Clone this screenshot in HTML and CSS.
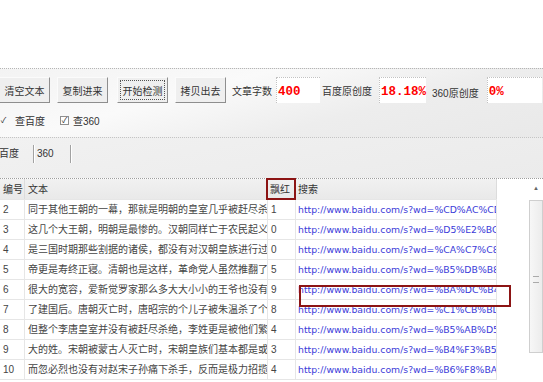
FILE: index.html
```html
<!DOCTYPE html>
<html lang="zh-CN">
<head>
<meta charset="UTF-8" />
<title>原创度检测</title>
<link rel="stylesheet" href="styles.css">
</head>
<body>
<div class="blank"></div>

<!-- Панель кнопок -->
<div class="toolbar">
    <div class="btn-row">
        <button class="btn first">清空文本</button>
        <button class="btn">复制进来</button>
        <button class="btn focus">开始检测</button>
        <button class="btn">拷贝出去</button>
        <span class="label">文章字数</span>
        <span class="result r1">400</span>
        <span class="label">百度原创度</span>
        <span class="result r2">18.18%</span>
        <span class="label low">360原创度</span>
        <span class="result r3">0%</span>
    </div>
    <div class="check-row">
        <label class="check first"><span class="box">&#10003;</span>查百度</label>
        <label class="check"><span class="box">&#10003;</span>查360</label>
    </div>
</div>

<div class="tabs">
    <span class="tab t1">百度</span>
    <span class="tab t2">360</span>
</div>

<!-- Таблица результатов -->
<div class="grid-wrap">
    <div class="table">
        <div class="row head">
            <span>编号</span><span>文本</span><span>飘红</span><span>搜索</span>
        </div>
        <div class="row"><span>2</span><span>同于其他王朝的一幕，那就是明朝的皇室几乎被赶尽杀绝</span><span>1</span><span class="link">http://www.baidu.com/s?wd=%CD%AC%CD%CD</span></div>
        <div class="row"><span>3</span><span>这几个大王朝，明朝是最惨的。汉朝同样亡于农民起义</span><span>0</span><span class="link">http://www.baidu.com/s?wd=%D5%E2%BC%B8</span></div>
        <div class="row"><span>4</span><span>是三国时期那些割据的诸侯，都没有对汉朝皇族进行过大</span><span>0</span><span class="link">http://www.baidu.com/s?wd=%CA%C7%C8%FD</span></div>
        <div class="row"><span>5</span><span>帝更是寿终正寝。清朝也是这样，革命党人虽然推翻了清</span><span>5</span><span class="link">http://www.baidu.com/s?wd=%B5%DB%B8%FC</span></div>
        <div class="row"><span>6</span><span>很大的宽容，爱新觉罗家那么多大大小小的王爷也没有被</span><span>9</span><span class="link">http://www.baidu.com/s?wd=%BA%DC%B4%F3</span></div>
        <div class="row"><span>7</span><span>了建国后。唐朝灭亡时，唐昭宗的个儿子被朱温杀了个</span><span>8</span><span class="link">http://www.baidu.com/s?wd=%C1%CB%BD%A8</span></div>
        <div class="row"><span>8</span><span>但整个李唐皇室并没有被赶尽杀绝，李姓更是被他们繁衍</span><span>4</span><span class="link">http://www.baidu.com/s?wd=%B5%AB%D5%FB</span></div>
        <div class="row"><span>9</span><span>大的姓。宋朝被蒙古人灭亡时，宋朝皇族们基本都是或被</span><span>3</span><span class="link">http://www.baidu.com/s?wd=%B4%F3%B5%C4</span></div>
        <div class="row"><span>10</span><span>而忽必烈也没有对赵宋子孙痛下杀手，反而是极力招揽</span><span>4</span><span class="link">http://www.baidu.com/s?wd=%B6%F8%BA%F6</span></div>
    </div>
    <div class="scroll">
        <div class="arrow">&#9650;</div>
        <div class="track"><span class="grip"></span></div>
    </div>

    <div class="mark mark-head"></div>
    <div class="mark mark-row"></div>
</div>
</body>
</html>
```

FILE: styles.css
```css
body {
    margin: 0;
    width: 543px;
    height: 382px;
    overflow: hidden;
    background: #fff;
    font-family: "Liberation Sans", "Noto Sans CJK SC", sans-serif;
    font-size: 10px;
    color: #333;
}
.blank {
    height: 68px;
}
/* Панель */
.toolbar {
    height: 68px;
    border-top: 1px dotted #b5b5b5;
    background: linear-gradient(165deg, #f3f3f3 0%, #fafafa 35%, #ededed 65%, #e9e9e9 100%);
}
.btn-row {
    display: flex;
    align-items: center;
    height: 26px;
    padding-top: 8px;
}
.btn {
    width: 51px;
    height: 26px;
    padding: 0;
    margin-right: 7px;
    font: inherit;
    color: #333;
    background: #efefef;
    border: 1px solid;
    border-color: #fbfbfb #8e8e8e #8e8e8e #fbfbfb;
}
.btn.first {
    margin-left: -1px;
}
.btn:nth-child(2) {
    margin-right: 9px;
}
.btn.focus {
    outline: 1px dotted #555;
    outline-offset: -4px;
}
.label {
    margin-left: -1px;
    margin-right: 4px;
    white-space: nowrap;
}
.label.low {
    padding-top: 4px;
}
.result {
    box-sizing: border-box;
    height: 26px;
    line-height: 28px;
    padding-left: 1px;
    background: #fff;
    border-top: 1px dotted #c2c2c2;
    border-left: 1px dotted #c2c2c2;
    color: #f00;
    font-family: "Liberation Mono", monospace;
    font-weight: bold;
    font-size: 12.5px;
}
.r1 { width: 44px; margin-right: 3px; }
.r2 { width: 47px; margin-right: 7px; margin-left: 3px; }
.r3 { width: 55px; margin-left: 4px; }

.check-row {
    display: flex;
    align-items: center;
    height: 16px;
    margin-top: 9px;
}
.check {
    display: flex;
    align-items: center;
    gap: 4px;
    margin-right: 15px;
}
.check.first {
    gap: 7px;
    margin-left: -1px;
}
.box {
    box-sizing: border-box;
    width: 9px;
    height: 9px;
    border: 1px solid #8f8f8f;
    background: #fff;
    font-size: 8px;
    line-height: 7px;
    text-align: center;
    color: #222;
}
.check.first .box {
    border-color: transparent;
    background: none;
}

/* Вкладки */
.tabs {
    display: flex;
    height: 33px;
    padding-top: 7px;
    border-top: 1px dotted #c4c4c4;
    background: linear-gradient(170deg, #f1f1f1, #ebebeb);
}
.tab {
    height: 18px;
    line-height: 18px;
    border-right: 1px solid #a2a2a2;
    box-shadow: 1px 0 0 #fff;
}
.t1 {
    width: 34px;
    margin-left: -1px;
}
.t2 {
    padding-left: 3px;
    width: 33px;
}

/* Таблица */
.grid-wrap {
    position: relative;
    display: flex;
    border-top: 1px dotted #9d9d9d;
}
.table {
    width: 497px;
}
.row {
    display: grid;
    grid-template-columns: 25px 243px 28px 201px;
    height: 20px;
    line-height: 20px;
    border-bottom: 1px solid #e6e6e6;
    box-sizing: border-box;
    color: #444;
}
.row span {
    overflow: hidden;
    white-space: nowrap;
    padding-left: 3px;
    border-right: 1px solid #e6e6e6;
}
.row span:nth-child(4) {
    padding-left: 2px;
}
.row.head {
    height: 21px;
    line-height: 21px;
    background: linear-gradient(#f1f1f1, #e9e9e9);
    color: #333;
}
.row.head span {
    border-right-color: #dcdcdc;
}
.row.head span:nth-child(3) {
    padding-left: 2px;
}
.link {
    font-family: "DejaVu Sans", sans-serif;
    font-size: 9.3px;
    color: #3b3bd9;
}
.scroll {
    display: flex;
    flex-direction: column;
    width: 14px;
    margin-left: auto;
}
.arrow {
    height: 21px;
    font-size: 6px;
    line-height: 18px;
    text-align: center;
    color: #666;
}
.track {
    position: relative;
    height: 153px;
    box-sizing: border-box;
    border: 1px solid #cfcfcf;
    background: linear-gradient(90deg, #f7f7f7, #ececec);
}
.grip {
    position: absolute;
    left: 3px;
    top: 75px;
    width: 6px;
    height: 5px;
    border-top: 1px solid #aaa;
    border-bottom: 1px solid #aaa;
}

/* Красные пометки */
.mark {
    position: absolute;
    border: 2px solid #8c1414;
    box-sizing: border-box;
}
.mark-head {
    left: 266px;
    top: -1px;
    width: 30px;
    height: 22px;
}
.mark-row {
    left: 299px;
    top: 106px;
    width: 212px;
    height: 22px;
}
```
